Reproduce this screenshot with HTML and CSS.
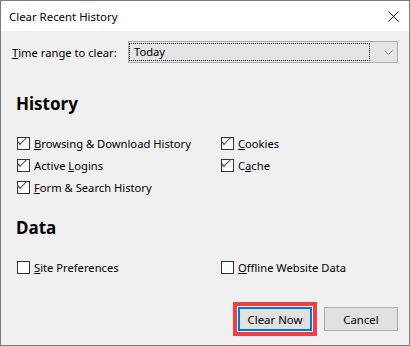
FILE: index.html
```html
<!DOCTYPE html>
<html lang="en">
<head>
<meta charset="UTF-8">
<title>Clear Recent History</title>
<link rel="stylesheet" href="styles.css">
</head>
<body>

<div class="window">
  <div class="titlebar">
    <span class="title">Clear Recent History</span>
    <svg class="close" width="11" height="11" viewBox="0 0 11 11">
      <path d="M0.5 0.5 L10.5 10.5 M10.5 0.5 L0.5 10.5" stroke="#000" stroke-width="1" fill="none"/>
    </svg>
  </div>

  <div class="content">
    <div class="range-row">
      <label><u>T</u>ime range to clear:</label>
      <div class="select">
        <span class="select-value">Today</span>
        <svg class="chevron" width="9" height="5" viewBox="0 0 9 5">
          <path d="M0.5 0.5 L4.5 4.5 L8.5 0.5" stroke="#888" stroke-width="1" fill="none"/>
        </svg>
      </div>
    </div>

    <h2>History</h2>
    <div class="options">
      <div class="option"><span class="box checked"></span><span><u>B</u>rowsing &amp; Download History</span></div>
      <div class="option"><span class="box checked"></span><span><u>C</u>ookies</span></div>
      <div class="option"><span class="box checked"></span><span>Active <u>L</u>ogins</span></div>
      <div class="option"><span class="box checked"></span><span>C<u>a</u>che</span></div>
      <div class="option"><span class="box checked"></span><span><u>F</u>orm &amp; Search History</span></div>
    </div>

    <h2 class="data-heading">Data</h2>
    <div class="options">
      <div class="option"><span class="box"></span><span><u>S</u>ite Preferences</span></div>
      <div class="option"><span class="box"></span><span><u>O</u>ffline Website Data</span></div>
    </div>

    <div class="buttons">
      <button class="btn primary">Clear Now</button>
      <button class="btn">Cancel</button>
    </div>
  </div>
</div>

</body>
</html>
```

FILE: styles.css
```css
body {
  margin: 0;
  font-family: "Segoe UI", "Noto Sans", Arial, sans-serif;
  font-size: 11.2px;
  color: #000;
}

.window {
  width: 410px;
  height: 346px;
  box-sizing: border-box;
  border: 1px solid #7a7a7a;
  background: #f0f0f0;
  display: flex;
  flex-direction: column;
}

.titlebar {
  height: 30px;
  background: #fff;
  display: flex;
  align-items: center;
  justify-content: space-between;
  padding: 0 10px 0 8px;
}

.title {
  font-size: 11.4px;
}

.content {
  flex: 1;
  display: flex;
  flex-direction: column;
  padding: 10px 11px 0 11px;
}

.range-row {
  display: flex;
  align-items: center;
  justify-content: space-between;
}

.select {
  width: 270px;
  height: 22px;
  box-sizing: border-box;
  border: 1px solid #adadad;
  background: #e5e5e5;
  display: flex;
  align-items: center;
  justify-content: space-between;
  padding: 0 4px 0 1px;
}

.select-value {
  flex: 1;
  height: 16px;
  line-height: 16px;
  margin-right: 15px;
  padding-left: 4px;
  outline: 1px dotted #000;
}

h2 {
  margin: 29px 0 0 4px;
  font-size: 17px;
  font-weight: bold;
  line-height: 24px;
}

.data-heading {
  margin-top: 22px;
}

.options {
  display: grid;
  grid-template-columns: 204px 1fr;
  row-gap: 9px;
  margin: 21px 0 0 5px;
}

.option {
  display: flex;
  align-items: center;
  gap: 4px;
  height: 13px;
}

.box {
  width: 13px;
  height: 13px;
  box-sizing: border-box;
  border: 1px solid #333;
  background: #fff;
  position: relative;
}

.box.checked::after {
  content: "";
  position: absolute;
  left: 2px;
  top: 0px;
  width: 6px;
  height: 3px;
  border-left: 1px solid #555;
  border-bottom: 1px solid #555;
  transform: translate(0, 3px) rotate(-45deg) scaleX(1.4);
  transform-origin: left bottom;
}

.buttons {
  margin-top: auto;
  margin-bottom: 14px;
  display: flex;
  justify-content: flex-end;
  gap: 12px;
}

.btn {
  width: 74px;
  height: 24px;
  box-sizing: border-box;
  border: 1px solid #adadad;
  background: #e1e1e1;
  font-family: inherit;
  font-size: 11.4px;
  padding: 0;
}

.btn.primary {
  border: 2px solid #0078d7;
  outline: 4px solid #ef3f47;
  outline-offset: 1px;
}
```
